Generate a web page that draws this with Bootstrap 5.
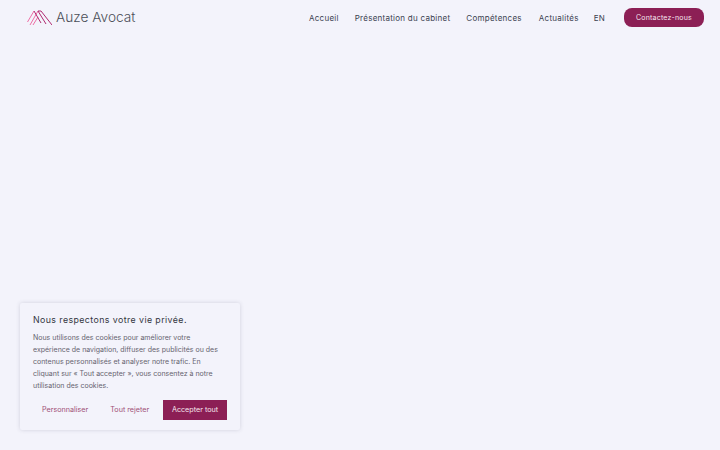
<!DOCTYPE html>
<html lang="fr"><head><meta charset="utf-8">
<link href="https://cdn.jsdelivr.net/npm/bootstrap@5.3.0/dist/css/bootstrap.min.css" rel="stylesheet">
<style>
html,body{height:450px;overflow:hidden}
body{background:#f3f3fb;font-family:"Inter","Liberation Sans",sans-serif;color:#333a45}
.topbar{height:35px;padding:0 16px 0 27px}
.logo-gap{gap:4px}
.brand-name{font-size:13.7px;color:#4b4f58;font-weight:300;line-height:18px;padding-bottom:2px}
.menu-link{font-size:8px;letter-spacing:.26px;color:#3a4150;text-decoration:none;white-space:nowrap}
.menu-gap{gap:16px}
.menu-actu{margin-left:1px}
.menu-lang{margin-left:-1px}
.cta-pill{background:#8c1f55;color:#f5e6ee;border:0;border-radius:8px;font-size:7px;letter-spacing:.2px;width:80px;height:19px;padding:1px 0 0;display:flex;align-items:center;justify-content:center;margin-left:3px}
.consent-box{position:absolute;left:20px;top:303px;width:220px;height:127px;background:#f3f3fb;box-shadow:0 0 4px rgba(60,60,90,.18);padding:10px 13px 11px 13px;border-radius:2px}
.consent-title{font-size:8.8px;letter-spacing:.42px;font-weight:400;color:#33373f;line-height:13px;margin:0 0 6px}
.consent-text{font-size:7px;line-height:12px;color:#66636f;margin:0;height:60px;white-space:nowrap}
.consent-acts{margin-top:8px}
.plain-act{background:none;border:0;color:#8c1f55;font-size:7.2px;padding:0;height:20px;opacity:.8}
.act-first{margin:0 22px 0 9px}
.fill-act{background:#8c1f55;color:#f5e6ee;border:0;border-radius:0;font-size:7.2px;width:64px;height:20px;padding:0}
</style></head>
<body>
<nav class="topbar d-flex align-items-center justify-content-between">
  <a class="d-flex align-items-center logo-gap text-decoration-none" href="#">
    <svg width="25" height="17" viewBox="0 0 25 17" fill="none" stroke-width="1"><path d="M0.5 13 L7 2 M3 16 L11 2 M6 16 L11 8" stroke="#ee6ea5"/><path d="M7 2 L14 14 M11 2 L19 15 M14 2 L25 16 M11 2 L14 2" stroke="#b02a70"/></svg>
    <span class="brand-name">Auze Avocat</span>
  </a>
  <div class="d-flex align-items-center menu-gap">
    <a class="menu-link" href="#">Accueil</a>
    <a class="menu-link" href="#">Présentation du cabinet</a>
    <a class="menu-link" href="#">Compétences</a>
    <a class="menu-link menu-actu" href="#">Actualités</a>
    <a class="menu-link menu-lang" href="#">EN</a>
    <button class="cta-pill">Contactez-nous</button>
  </div>
</nav>
<aside class="consent-box">
  <p class="consent-title">Nous respectons votre vie privée.</p>
  <p class="consent-text">Nous utilisons des cookies pour améliorer votre<br>expérience de navigation, diffuser des publicités ou des<br>contenus personnalisés et analyser notre trafic. En<br>cliquant sur « Tout accepter », vous consentez à notre<br>utilisation des cookies.</p>
  <div class="consent-acts d-flex align-items-center">
    <button class="plain-act act-first">Personnaliser</button>
    <button class="plain-act">Tout rejeter</button>
    <button class="fill-act ms-auto">Accepter tout</button>
  </div>
</aside>
<script src="https://cdn.jsdelivr.net/npm/bootstrap@5.3.0/dist/js/bootstrap.bundle.min.js"></script>
</body></html>
